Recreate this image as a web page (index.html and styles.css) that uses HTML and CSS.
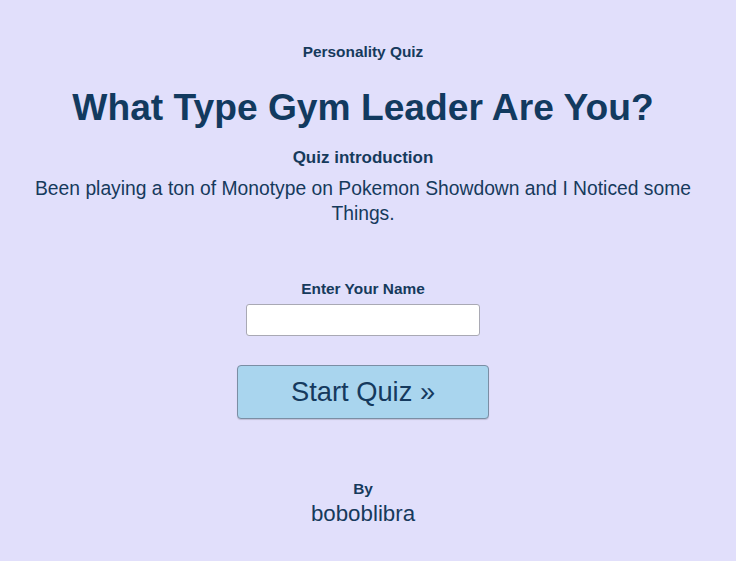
FILE: index.html
```html
<!DOCTYPE html>
<html>
<head>
<meta charset="utf-8">
<link rel="stylesheet" href="styles.css">
</head>
<body>
<main class="page">
  <div class="kicker">Personality Quiz</div>
  <h1 class="title">What Type Gym Leader Are You?</h1>
  <div class="intro-label">Quiz introduction</div>
  <p class="intro">Been playing a ton of Monotype on Pokemon Showdown and I Noticed some Things.</p>
  <label class="name-label" for="name">Enter Your Name</label>
  <input class="name-input" id="name" type="text">
  <button class="start">Start Quiz &raquo;</button>
  <div class="by">By</div>
  <div class="author">boboblibra</div>
</main>
</body>
</html>
```
FILE: styles.css
```css
html, body {
  margin: 0;
  padding: 0;
  background: #e1dffb;
}
body {
  font-family: "Liberation Sans", Arial, sans-serif;
  color: #163a5c;
}
.page {
  display: flex;
  flex-direction: column;
  align-items: center;
  text-align: center;
  padding: 43px 30px 0 20px;
}
.kicker {
  font-size: 15.4px;
  font-weight: bold;
  line-height: 18px;
}
.title {
  margin: 25px 0 0;
  font-size: 37.2px;
  line-height: 42px;
  font-weight: bold;
  color: #123a5f;
}
.intro-label {
  margin-top: 20px;
  font-size: 17px;
  font-weight: bold;
  line-height: 20px;
}
.intro {
  margin: 8px 0 0;
  font-size: 19.3px;
  line-height: 25px;
  max-width: 686px;
}
.name-label {
  margin-top: 54px;
  font-size: 15.4px;
  font-weight: bold;
  line-height: 18px;
}
.name-input {
  margin-top: 6px;
  width: 234px;
  height: 32px;
  box-sizing: border-box;
  border: 1px solid #a9a9b4;
  border-radius: 3px;
  background: #fff;
}
.start {
  margin-top: 29px;
  width: 252px;
  height: 54px;
  box-sizing: border-box;
  background: #a9d5ee;
  border: 1px solid #7b8ea4;
  border-radius: 4px;
  color: #153a5e;
  font-family: "Liberation Sans", Arial, sans-serif;
  font-size: 27.3px;
  box-shadow: 0 1px 1px rgba(0,0,0,0.15);
}
.by {
  margin-top: 61px;
  font-size: 15.4px;
  font-weight: bold;
  line-height: 18px;
}
.author {
  margin-top: 4px;
  font-size: 22.3px;
  line-height: 24px;
}
```
